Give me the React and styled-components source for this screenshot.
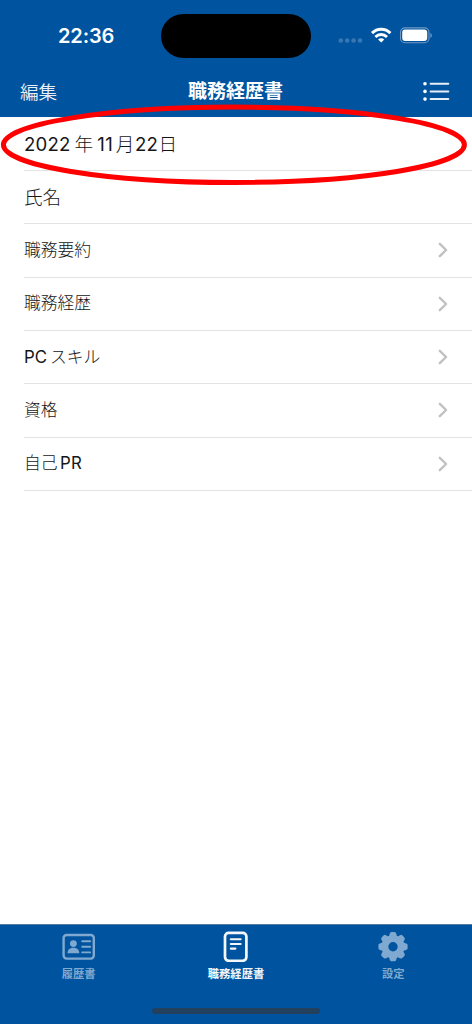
import React from 'react';
import styled, { createGlobalStyle } from 'styled-components';

const GlobalStyle = createGlobalStyle`
  *, *::before, *::after { box-sizing: border-box; }
  body { margin: 0; background: #fff; }
`;

const Screen = styled.div`
  position: relative;
  display: flex;
  flex-direction: column;
  width: 472px;
  height: 1024px;
  overflow: hidden;
  background: #fff;
  font-family: Inter, 'Noto Sans CJK JP', sans-serif;
`;

const Header = styled.header`
  flex: none;
  height: 117px;
  background: #00549f;
  color: #fff;
`;

const StatusBar = styled.div`
  display: grid;
  grid-template-columns: 161px 150px 161px;
  align-items: center;
  height: 71px;
`;

const Clock = styled.time`
  padding-left: 58px;
  font-size: 20px;
  font-weight: 600;
  line-height: 24px;
  letter-spacing: -0.1px;
`;

const Island = styled.div`
  height: 44px;
  border-radius: 22px;
  background: #000;
`;

const StatusIcons = styled.div`
  display: flex;
  align-items: center;
  padding-left: 27px;
  svg { display: block; }
`;

const NavBar = styled.nav`
  display: grid;
  grid-template-columns: 1fr auto 1fr;
  align-items: center;
  height: 42px;
  padding: 0 22px 0 20px;
`;

const EditButton = styled.button`
  justify-self: start;
  padding: 0 0 1px;
  border: 0;
  background: none;
  color: #e6eef6;
  font-family: inherit;
  font-size: 18.6px;
  line-height: 28px;
  font-weight: 350;
`;

const Title = styled.h1`
  margin: 0;
  padding-left: 1px;
  font-size: 19px;
  line-height: 28px;
  font-weight: 700;
`;

const MenuButton = styled.button`
  justify-self: end;
  padding: 0;
  border: 0;
  background: none;
  svg { display: block; }
`;

const List = styled.ul`
  flex: 1;
  margin: 0;
  padding: 0.6px 0 0 24px;
  list-style: none;
`;

const Row = styled.li`
  display: flex;
  align-items: center;
  justify-content: space-between;
  height: 53.35px;
  padding-right: 23px;
  border-bottom: 1px solid #e3e3e5;
  color: #161616;
  font-size: ${(p) => (p.$large ? 18.6 : 16.8)}px;
  line-height: 28px;
  font-weight: 300;
  svg { display: block; }
`;

const Label = styled.span`
  display: flex;
  align-items: center;
  gap: ${(p) => p.$gap || 0}px;
  padding-bottom: ${(p) => p.$lift || 0}px;
`;

const Latin = styled.span`
  font-weight: 370;
  letter-spacing: ${(p) => p.$tracking || 0}px;
`;

const TabBar = styled.footer`
  display: flex;
  flex-direction: column;
  flex: none;
  height: 100px;
  background: #00549f;
  border-top: 1px solid #587ca6;
`;

const Tabs = styled.div`
  display: grid;
  grid-template-columns: repeat(3, 1fr);
  height: 84px;
`;

const Tab = styled.div`
  display: flex;
  flex-direction: column;
  align-items: center;
  padding-top: 6px;
  color: ${(p) => (p.$active ? '#f4f8fc' : '#7fa9d0')};
  font-size: 11.3px;
  line-height: 18px;
  font-weight: 700;
  svg { display: block; margin-bottom: 3px; }
`;

const HomeIndicator = styled.div`
  align-self: center;
  width: 168px;
  height: 6px;
  margin-top: -1px;
  border-radius: 3px;
  background: #23415f;
`;

const Highlight = styled.svg`
  position: absolute;
  top: 0;
  left: 0;
  pointer-events: none;
`;

const SignalWifiBattery = () => (
  <svg width="96" height="20" viewBox="0 0 96 20">
    <g fill="#3977b2">
      {[2.8, 9.2, 15.6, 22].map((x) => (
        <circle key={x} cx={x} cy="14.5" r="2.3" />
      ))}
    </g>
    <g fill="none" stroke="#fff" strokeWidth="2.9">
      <path d="M34 7.1C39.2 1.9 47.2 1.9 52.4 7.1" />
      <path d="M37.4 11C40.7 7.7 45.7 7.7 49 11" />
    </g>
    <path d="M40.1 13.4c1.8-1.5 4.4-1.5 6.2 0l-3.1 3z" fill="#fff" />
    <rect x="62.5" y="1.9" width="28.5" height="14.8" rx="4.5" fill="none" stroke="#7198c3" strokeWidth="1.1" />
    <rect x="64.2" y="3.6" width="25" height="11.4" rx="3" fill="#fff" />
    <path d="M92.4 7v4.8c2-.7 2-4.1 0-4.8z" fill="#7198c3" />
  </svg>
);

const ListIcon = () => (
  <svg width="28" height="22" viewBox="0 0 28 22">
    {[2.7, 10.4, 18.1].map((y) => (
      <g key={y}>
        <circle cx="3" cy={y} r="1.8" fill="#fff" />
        <path d={`M8.6 ${y}H26.3`} stroke="#e6eef6" strokeWidth="2" strokeLinecap="round" />
      </g>
    ))}
  </svg>
);

const Chevron = () => (
  <svg width="12" height="16" viewBox="0 0 12 16">
    <path d="M2.8 1.8l6.3 6.2-6.3 6.2" fill="none" stroke="#c1c1c4" strokeWidth="2.4" strokeLinecap="round" strokeLinejoin="round" />
  </svg>
);

const CardIcon = () => (
  <svg width="34" height="31" viewBox="0 0 34 31">
    <rect x="1.6" y="4" width="30.2" height="23.6" rx="3" fill="none" stroke="currentColor" strokeWidth="2.4" />
    <circle cx="11.4" cy="12.6" r="3.4" fill="currentColor" />
    <path d="M5.5 22.2c0-7.2 11.8-7.2 11.8 0z" fill="currentColor" />
    <path d="M20.2 10.3h8M20.2 15.7h8M20.2 21.4h8" stroke="currentColor" strokeWidth="1.9" strokeLinecap="round" />
  </svg>
);

const DocumentIcon = () => (
  <svg width="34" height="31" viewBox="0 0 34 31">
    <rect x="6" y="1.9" width="21.4" height="27.9" rx="3.7" fill="none" stroke="currentColor" strokeWidth="2.7" />
    <path d="M11.8 8.2h9.8M11.8 13h9.8M11.8 17.6h4.6" stroke="currentColor" strokeWidth="2.1" strokeLinecap="round" />
  </svg>
);

const GearIcon = () => (
  <svg width="34" height="31" viewBox="0 0 34 31">
    <g transform="translate(17 15.7)">
      <circle r="8" fill="none" stroke="currentColor" strokeWidth="6.6" />
      {[0, 45, 90, 135, 180, 225, 270, 315].map((angle) => (
        <path
          key={angle}
          transform={`rotate(${angle})`}
          d="M-4.6-9.8Q-3.6-11-3.2-13.1Q-2.8-14.6-1.5-14.6H1.5Q2.8-14.6 3.2-13.1Q3.6-11 4.6-9.8z"
          fill="currentColor"
        />
      ))}
    </g>
  </svg>
);

const sections = [
  { id: 'summary', label: '職務要約' },
  { id: 'history', label: '職務経歴' },
  { id: 'pc', label: <><Latin>PC</Latin>スキル</>, gap: 3 },
  { id: 'licence', label: '資格' },
  { id: 'pr', label: <>自己<Latin $tracking={0.3}>PR</Latin></>, gap: 2.5 },
];

export default function App() {
  return (
    <Screen lang="ja">
      <GlobalStyle />
      <Header>
        <StatusBar>
          <Clock>22:36</Clock>
          <Island />
          <StatusIcons><SignalWifiBattery /></StatusIcons>
        </StatusBar>
        <NavBar>
          <EditButton>編集</EditButton>
          <Title>職務経歴書</Title>
          <MenuButton aria-label="メニュー"><ListIcon /></MenuButton>
        </NavBar>
      </Header>
      <List>
        <Row $large>
          <Label $gap={4}>
            <Latin $tracking={0.2}>2022</Latin>年
            <Label $gap={2.4}>
              <Latin $tracking={0.5}>11</Latin>
              <Label $gap={0.6}>月<Latin $tracking={0.2}>22</Latin>日</Label>
            </Label>
          </Label>
        </Row>
        <Row $large><Label>氏名</Label></Row>
        {sections.map((s) => (
          <Row key={s.id}>
            <Label $gap={s.gap} $lift={1.2}>{s.label}</Label>
            <Chevron />
          </Row>
        ))}
      </List>
      <TabBar>
        <Tabs>
          <Tab><CardIcon />履歴書</Tab>
          <Tab $active><DocumentIcon />職務経歴書</Tab>
          <Tab><GearIcon />設定</Tab>
        </Tabs>
        <HomeIndicator />
      </TabBar>
      <Highlight width="472" height="200" viewBox="0 0 472 200">
        <ellipse cx="233.9" cy="144.8" rx="230.5" ry="37.7" fill="none" stroke="#f00" strokeWidth="5" />
      </Highlight>
    </Screen>
  );
}
